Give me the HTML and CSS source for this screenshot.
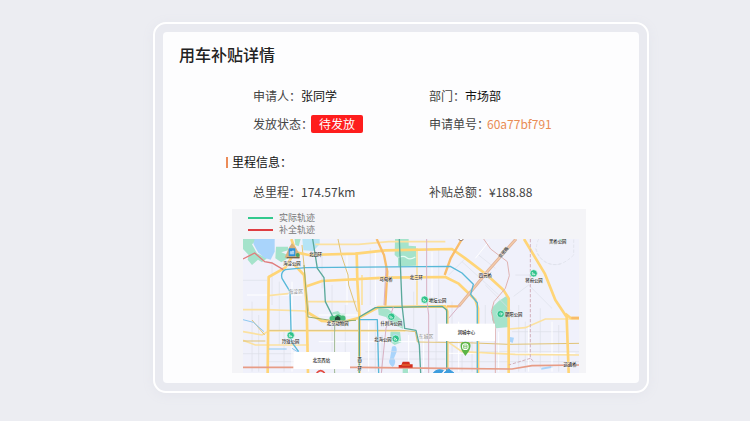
FILE: index.html
```html
<!DOCTYPE html>
<html lang="zh-CN">
<head>
<meta charset="utf-8">
<title>用车补贴详情</title>
<link rel="stylesheet" href="styles.css">
</head>
<body>
<main class="frame">
  <article class="panel">
    <h1 class="title">用车补贴详情</h1>
    <dl class="details">
      <div class="field"><dt>申请人：</dt><dd class="strong">张同学</dd></div>
      <div class="field"><dt>部门：</dt><dd class="strong">市场部</dd></div>
      <div class="field field-tight"><dt>发放状态：</dt><dd class="badge">待发放</dd></div>
      <div class="field field-tight"><dt>申请单号：</dt><dd class="order">60a77bf791</dd></div>
    </dl>
    <h2 class="section">里程信息：</h2>
    <dl class="details">
      <div class="field"><dt>总里程：</dt><dd>174.57km</dd></div>
      <div class="field"><dt>补贴总额：</dt><dd>¥188.88</dd></div>
    </dl>
    <section class="track">
      <ul class="legend">
        <li class="actual">实际轨迹</li>
        <li class="filled">补全轨迹</li>
      </ul>
      <svg class="map" viewBox="33 102 1008 402" role="img" aria-label="行程地图">
        <rect x="33" y="102" width="1008" height="402" fill="#f0f1fb"/>
        <!-- parks and water -->
        <g fill="#a5e3cb">
          <path d="M33 102H78L60 118L75 145L105 160L90 172L78 164L60 180L47 164L50 150L33 132Z"/>
          <path d="M132 125H168V136L148 142L168 150V160L148 172L130 160Z"/>
          <path d="M188 102H206L200 124L190 120Z"/>
          <path d="M489 102H530V122L552 124V182L498 184V158L488 150Z"/>
          <path d="M438 308L468 312L510 345L514 372L480 356L462 336L440 330Z"/>
          <path d="M476 376L504 380L508 412L488 420L474 410Z"/>
          <path d="M780 308L800 288L822 274L832 286V366L792 370L780 344Z"/>
          <path d="M290 340L302 322L318 318L326 326L340 326V346L300 350Z"/>
          <path d="M980 102H1002V108L988 112Z"/>
          <path d="M512 490H528V504H512Z"/>
        </g>
        <g fill="#a9d4fb">
          <path d="M68 102H128V140L116 164L96 158L78 142L64 116Z"/>
          <path d="M211 102H263V118L244 138L214 136Z" fill="#b5e4f5"/>
          <path d="M484 386L500 390L496 412L484 408Z"/>
          <path d="M480 425Q496 418 494 440L486 460Q496 472 482 486Q466 476 474 460Z"/>
          <path d="M834 396L846 398L842 414L834 410Z"/>
          <path d="M928 488L962 482V488L928 494Z"/>
        </g>
        <path d="M500 158Q514 150 524 158T550 156" fill="none" stroke="#e6fbf4" stroke-width="4"/>
        <!-- minor streets -->
        <g fill="none" stroke="#dddfe8" stroke-width="2">
          <path d="M33 226H105M120 170V300M60 290V500M80 330V500M142 230V420M156 380V500M33 446H230M110 470H240M255 290H380M270 150V250M300 240V440M340 300V490M415 130V300M430 350V500M390 462H640M400 440H640M450 390V500M545 260V370M612 310V500M620 130V290M660 290V500M690 400V500M720 400V500M650 470H1041M760 300V360M860 300V500M880 350V500M925 310V490M980 360V500M745 440H1041M840 380H1000M690 170L800 270M650 210L700 160M740 150L790 190"/>
          <path d="M920 102Q900 145 940 170T1025 150V102M910 130Q930 190 990 176" stroke-dasharray="10 5"/>
          <path d="M845 274L890 240L960 310M850 210H900M760 240L850 330"/>
        </g>
        <g fill="none" stroke="#fff" stroke-width="3">
          <path d="M45 270H210M180 230V500M260 330H380M260 410H610M310 380V500M410 350V500M530 390V500M575 390V500M650 445H1030M800 380V500M890 360V500M960 350V500M600 140V290M345 150V300M430 140V300M770 110L730 160M680 350V500"/>
        </g>
        <!-- secondary roads -->
        <g fill="none" stroke="#fbe1a0" stroke-width="5">
          <path d="M250 118H380L470 110H640M108 272L168 266M33 314H105L220 318M555 130V300M390 210V300M222 290H372M33 406L70 420H230"/>
          <path d="M832 372L880 368L940 342H1041M650 412L690 440L850 448L1041 450M33 380L90 390L110 378H520"/>
        </g>
        <g fill="none" stroke="#e0c376" stroke-width="3">
          <path d="M105 376H510L550 380L556 411L700 413L830 418L1041 415M33 408H100M60 345L98 390"/>
          <path d="M318 102L328 150L348 210L350 240L376 320M210 120L230 320"/>
        </g>
        <!-- trunk roads -->
        <g fill="none" stroke="#ffd577" stroke-width="8" stroke-linejoin="round">
          <path d="M178 102L192 142L230 150L372 146L460 136L660 132L700 160L765 210L815 256L830 280V504"/>
          <path d="M182 152L160 188L110 216L107 504M186 178L216 210L224 300L228 504"/>
          <path d="M374 142L376 228L382 330V504M224 244L270 228L460 218L640 216L680 236L730 284L738 310V504"/>
          <path d="M220 318L270 348L330 352L382 338L440 306L640 304L646 320V504"/>
          <path d="M876 102L938 205L970 285L1004 336L1010 504M1000 326L1016 339H1041"/>
        </g>
        <g fill="none" stroke="#f9bd6a" stroke-width="7">
          <path d="M434 102L456 150L466 200L460 302M690 102L656 160L638 210M645 304H680M1018 339H1041"/>
        </g>
        <path d="M852 102L770 195L680 304" fill="none" stroke="#dfb29b" stroke-width="9"/>
        <path d="M852 102L770 195L680 304" fill="none" stroke="#f4cba8" stroke-width="4"/>
        <!-- rail lines -->
        <g fill="none" stroke="#57b8d8" stroke-width="4" stroke-linejoin="round">
          <path d="M200 440L178 410L174 260L150 220Q145 202 160 194L220 188L655 184L690 204L724 238L716 268L736 294V504M382 344H436L440 504"/>
          <path d="M33 344L64 352L96 380M110 432H164M180 430L200 442" stroke="#8dc8f0" stroke-width="3"/>
        </g>
        <g fill="none" stroke="#5aa99b" stroke-width="4" stroke-linejoin="round">
          <path d="M242 102L256 190L276 218L280 290L310 350M382 504V336L430 308L630 304L644 315V504M502 102L510 300L518 370L552 376L562 420L566 504"/>
          <path d="M216 180L228 336L310 348L372 346" stroke="#9aac68" stroke-width="3"/>
          <path d="M308 350V504" stroke="#99b58e" stroke-width="3"/>
        </g>
        <g fill="none" stroke="#d8b0c2" stroke-width="3">
          <path d="M584 102V280L590 330V504M462 190L456 300M484 306L462 370L448 504M650 340L684 300"/>
          <path d="M895 102V460L906 470M895 460L830 480" stroke="#d2b0bb" stroke-dasharray="10 5"/>
          <path d="M755 102L776 132L826 170L832 212L820 250L786 290L778 320L790 370V504" stroke="#dfb2b1"/>
        </g>
        <path d="M33 162L68 144L98 170L120 174L154 194" fill="none" stroke="#e07b7b" stroke-width="4"/>
        <path d="M33 487H380L640 490L840 492L900 482L1041 480" fill="none" stroke="#e79c86" stroke-width="5"/>
        <!-- landmarks -->
        <path d="M158 158L172 126L180 114L192 128L204 150V160Z" fill="#d9b27e"/>
        <rect x="170" y="130" width="20" height="24" rx="2" fill="#2c91dd"/>
        <path d="M175 148V140H179V148M181 148V138H185V148" stroke="#fff" stroke-width="2" fill="none"/>
        <path d="M164 158H202" stroke="#796349" stroke-width="4"/>
        <circle cx="197" cy="150" r="6" fill="#49a465"/>
        <path d="M294 346Q290 330 308 334Q318 322 328 332Q344 330 340 346Z" fill="#49bc7b"/>
        <path d="M309 346V338L317 332L325 338V346" fill="#24473a"/>
        <path d="M500 488V480H508L512 470H532L534 478H542V488Z" fill="#d32f20"/>
        <path d="M510 480H534" stroke="#f4a340" stroke-width="2"/>
        <path d="M604 504Q614 490 634 496L628 504M636 504L650 492L666 504" fill="#3d9dde" stroke="#3d9dde" stroke-width="3"/>
        <circle cx="687" cy="100" r="7" fill="#fff" stroke="#9c8374" stroke-width="3"/>
        <g fill="#2fc28b" stroke="#e3faf1" stroke-width="2">
          <circle cx="578" cy="284" r="11"/><circle cx="478" cy="335" r="11"/><circle cx="491" cy="401" r="11"/>
          <circle cx="176" cy="391" r="11"/><circle cx="806" cy="327" r="11"/><circle cx="905" cy="205" r="11"/>
        </g>
        <g fill="none" stroke="#fff" stroke-width="2">
          <path d="M574 280V288H582L576 282M474 331V339H482L476 333M487 397V405H495L489 399M172 387V395H180L174 389M801 327H811L806 322M806 332L811 327M901 201V209H909L903 203"/>
        </g>
        <!-- map labels -->
        <g class="map-text">
          <text x="251" y="153">北四环</text>
          <text x="180" y="180">海淀公园</text>
          <text x="191" y="265" class="district">海淀区</text>
          <text x="176" y="415">玲珑公园</text>
          <text x="317" y="361">北京动物园</text>
          <text x="462" y="227">马甸桥</text>
          <text x="553" y="223">北三环</text>
          <text x="617" y="290">地坛公园</text>
          <text x="478" y="360">什刹海公园</text>
          <text x="453" y="407">北海公园</text>
          <text x="582" y="399" class="district">东城区</text>
          <text x="845" y="333">朝阳公园</text>
          <text x="760" y="215">四元桥</text>
          <text x="906" y="231">将府公园</text>
          <text x="977" y="114">黑桥公园</text>
          <text x="1014" y="484">远通桥</text>
          <text x="814" y="147" transform="rotate(-51 814 142)">京密路</text>
          <text x="383" y="468">西</text>
          <text x="383" y="482">二</text>
          <text x="383" y="496">环</text>
        </g>
        <!-- trip end points -->
        <path d="M254 504Q266 490 278 504" fill="none" stroke="#e2493f" stroke-width="5"/>
        <path d="M700 453L690 438Q678 410 700 410Q724 410 711 438Z" fill="#5cb545"/>
        <circle cx="700" cy="425" r="10" fill="#fff"/>
        <path d="M695 420H705V430H695ZM695 425H705" fill="none" stroke="#5cb545" stroke-width="2"/>
        <g class="callout">
          <rect x="184" y="441" width="170" height="51"/>
          <text x="268" y="470">北京西站</text>
          <rect x="618" y="356" width="171" height="52"/>
          <text x="703" y="386">润城中心</text>
        </g>
      </svg>
    </section>
  </article>
</main>
</body>
</html>
```

FILE: styles.css
```css
* {
  box-sizing: border-box;
}

body {
  margin: 0;
  padding: 22px 101px 28px 153px;
  background: #ecedf2;
  color: #444;
  font: 12px/20px "Noto Sans CJK SC", sans-serif;
}

h1, h2, dl, dd, ul {
  margin: 0;
  padding: 0;
}

.frame {
  padding: 8px;
  border: 2px solid #fff;
  border-radius: 13px;
  background: #e9eaf0;
  box-shadow: 0 2px 12px #e4e5ec;
}

.panel {
  padding: 10px 16px;
  border-radius: 4px;
  background: #fdfdfe;
}

.title {
  margin-bottom: 20px;
  color: #222;
  font-size: 16px;
  font-weight: 500;
  line-height: 24px;
}

.details {
  display: grid;
  grid-template-columns: 1fr 1fr;
  gap: 8px 0;
  padding: 0 18px 0 74px;
}

.field {
  display: flex;
  align-items: center;
}

.field-tight dt {
  margin-right: -2px;
}

.strong {
  color: #111;
}

.badge {
  padding: 0 8px;
  border-radius: 2px;
  background: #fe1d1d;
  color: #fff;
  line-height: 18px;
}

.order {
  color: #e98c54;
}

.section {
  display: flex;
  align-items: center;
  gap: 4px;
  margin: 18px 0 10px 47px;
  color: #111;
  font-size: 12px;
  font-weight: 400;
}

.section::before {
  width: 2px;
  height: 11px;
  background: #ec8c59;
  content: "";
}

.track {
  margin: 7px 37px 0 53px;
  padding: 3px 7px 0 11px;
  background: #f4f4f7;
}

.legend {
  padding: 0 5px 3px;
  color: #777;
  font-size: 9px;
  line-height: 12px;
  list-style: none;
}

.legend li {
  display: flex;
  align-items: center;
  gap: 6px;
}

.legend li::before {
  width: 25px;
  height: 2px;
  background: #32c98d;
  content: "";
}

.legend .filled::before {
  background: #df3d42;
}

.map {
  display: block;
  width: 100%;
}

.map-text {
  fill: #222;
  stroke: #fff;
  stroke-width: 1px;
  paint-order: stroke;
  font-size: 13px;
  font-weight: 500;
  text-anchor: middle;
}

.map-text .district {
  fill: #888;
  font-size: 15px;
  font-weight: 400;
}

.callout rect {
  fill: #fff;
}

.callout text {
  fill: #111;
  font-size: 13px;
  font-weight: 500;
  text-anchor: middle;
}
```
